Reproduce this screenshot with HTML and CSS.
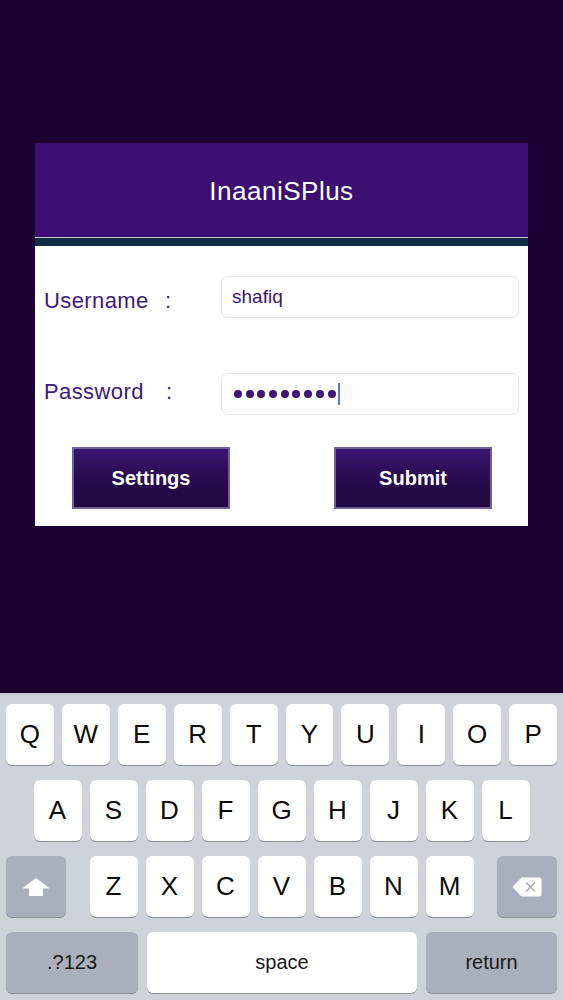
FILE: index.html
```html
<!DOCTYPE html>
<html>
<head>
<meta charset="utf-8">
<title>InaaniSPlus</title>
<link rel="stylesheet" href="styles.css">
</head>
<body>
<div class="screen">
  <main class="stage">
    <section class="card">
      <header class="card-header">
        <h1 class="title">InaaniSPlus</h1>
      </header>
      <div class="stripe"></div>
      <div class="card-body">
        <div class="form-row">
          <label class="label label-user"><span class="label-text">Username</span><span class="colon">:</span></label>
          <div class="field"><span class="field-text">shafiq</span></div>
        </div>
        <div class="form-row row-password">
          <label class="label label-pw"><span class="label-text">Password</span><span class="colon colon-pw">:</span></label>
          <div class="field">
            <span class="dots">
              <span class="dot"></span><span class="dot"></span><span class="dot"></span><span class="dot"></span><span class="dot"></span><span class="dot"></span><span class="dot"></span><span class="dot"></span><span class="dot"></span>
            </span>
            <span class="caret"></span>
          </div>
        </div>
        <div class="actions">
          <button class="btn">Settings</button>
          <button class="btn">Submit</button>
        </div>
      </div>
    </section>
  </main>
  <div class="keyboard">
    <div class="kb-row row-1">
      <span class="key">Q</span><span class="key">W</span><span class="key">E</span><span class="key">R</span><span class="key">T</span><span class="key">Y</span><span class="key">U</span><span class="key">I</span><span class="key">O</span><span class="key">P</span>
    </div>
    <div class="kb-row row-2">
      <span class="key">A</span><span class="key">S</span><span class="key">D</span><span class="key">F</span><span class="key">G</span><span class="key">H</span><span class="key">J</span><span class="key">K</span><span class="key">L</span>
    </div>
    <div class="kb-row row-3">
      <span class="key key-fn key-side">
        <svg class="icon-shift" width="26" height="18" viewBox="0 0 26 18"><path d="M13 0.5 L25.5 10 H19.5 V17.5 H6.5 V10 H0.5 Z" fill="#fff" stroke="#fff" stroke-linejoin="round"/></svg>
      </span>
      <div class="letters">
        <span class="key">Z</span><span class="key">X</span><span class="key">C</span><span class="key">V</span><span class="key">B</span><span class="key">N</span><span class="key">M</span>
      </div>
      <span class="key key-fn key-side">
        <svg class="icon-back" width="30" height="20" viewBox="0 0 30 20"><path d="M0.5 10 L9.5 0.5 H27.5 Q29.5 0.5 29.5 2.5 V17.5 Q29.5 19.5 27.5 19.5 H9.5 Z" fill="#fff"/><path d="M14 5.5 L23 14.5 M23 5.5 L14 14.5" stroke="#a6a9b6" stroke-width="1.4"/></svg>
      </span>
    </div>
    <div class="kb-row row-4">
      <span class="key key-fn key-wide key-num">.?123</span>
      <span class="key key-space">space</span>
      <span class="key key-fn key-wide key-return">return</span>
    </div>
  </div>
</div>
</body>
</html>
```

FILE: styles.css
```css
* { box-sizing: border-box; }

html, body {
  margin: 0;
  padding: 0;
}

body {
  background: #1d0032;
  font-family: "Liberation Sans", Arial, sans-serif;
}

.screen {
  width: 563px;
  height: 1000px;
  display: flex;
  flex-direction: column;
  overflow: hidden;
}

.stage {
  height: 693px;
  padding-top: 143px;
  padding-left: 35px;
}

.card {
  width: 493px;
  background: #ffffff;
  display: flex;
  flex-direction: column;
}

.card-header {
  height: 95px;
  background: #3e0f72;
  display: flex;
  align-items: center;
  justify-content: center;
  border-bottom: 1px solid #d4cde3;
}

.title {
  margin: 0;
  color: #ffffff;
  font-weight: normal;
  font-size: 26px;
  letter-spacing: 0.5px;
  padding-top: 2px;
}

.stripe {
  height: 8px;
  background: #112d45;
}

.card-body {
  padding: 30px 9px 17px 9px;
  display: flex;
  flex-direction: column;
}

.form-row {
  display: grid;
  grid-template-columns: 177px 1fr;
  align-items: center;
  height: 42px;
}

.row-password {
  margin-top: 55px;
}

.label {
  display: flex;
  align-items: center;
  color: #3d1a78;
  font-size: 22px;
  letter-spacing: 0.4px;
}

.label-user {
  margin-top: 7px;
}

.label-pw {
  margin-top: -4px;
}

.label-text {
  width: 121px;
}

.colon {
  color: #3d1a78;
}

.colon-pw {
  margin-left: 1px;
}

.field {
  height: 42px;
  border: 1px solid #e7e7ec;
  border-radius: 7px;
  background: #fff;
  display: flex;
  align-items: center;
  padding-left: 10px;
}

.field-text {
  color: #3a1668;
  font-size: 19px;
  margin-top: -1px;
}

.dots {
  display: flex;
  gap: 3.7px;
  padding-left: 2px;
}

.dot {
  width: 8px;
  height: 8px;
  border-radius: 50%;
  background: #3d1272;
}

.caret {
  width: 2px;
  height: 22px;
  background: #4e7fe3;
  margin-left: 2px;
}

.actions {
  display: flex;
  justify-content: space-between;
  padding: 0 27px 0 28px;
  margin-top: 32px;
}

.btn {
  width: 158px;
  height: 62px;
  border: 2px solid #71609a;
  background: linear-gradient(to bottom, #3a1570 0%, #2a0c52 45%, #1f0840 100%);
  color: #ffffff;
  font-family: "Liberation Sans", Arial, sans-serif;
  font-weight: bold;
  font-size: 20px;
  padding: 0;
}

/* Keyboard */
.keyboard {
  flex: 1;
  background: #d0d2d9;
  border-top: 1px solid #c5c6cd;
  padding: 10px 6px 0 6px;
  display: flex;
  flex-direction: column;
  gap: 15px;
}

.kb-row {
  display: flex;
  height: 61px;
  gap: 8px;
}

.row-2 {
  justify-content: center;
}

.row-3 {
  justify-content: space-between;
  gap: 0;
}

.letters {
  display: flex;
  gap: 8px;
}

.row-4 {
  gap: 9px;
}

.key {
  width: 48px;
  height: 61px;
  background: #ffffff;
  border-radius: 6px;
  box-shadow: 0 1px 0 #8d8f95;
  display: flex;
  align-items: center;
  justify-content: center;
  font-size: 26px;
  color: #0a0a0a;
}

.key-fn {
  background: #abaebb;
}

.key-side {
  width: 60px;
}

.key-wide {
  width: 132px;
  font-size: 20px;
  color: #1a1a1a;
}

.key-return {
  width: 131px;
}

.key-space {
  width: 270px;
  font-size: 20px;
  color: #1a1a1a;
}

.icon-shift {
  margin-top: 1px;
}
```
